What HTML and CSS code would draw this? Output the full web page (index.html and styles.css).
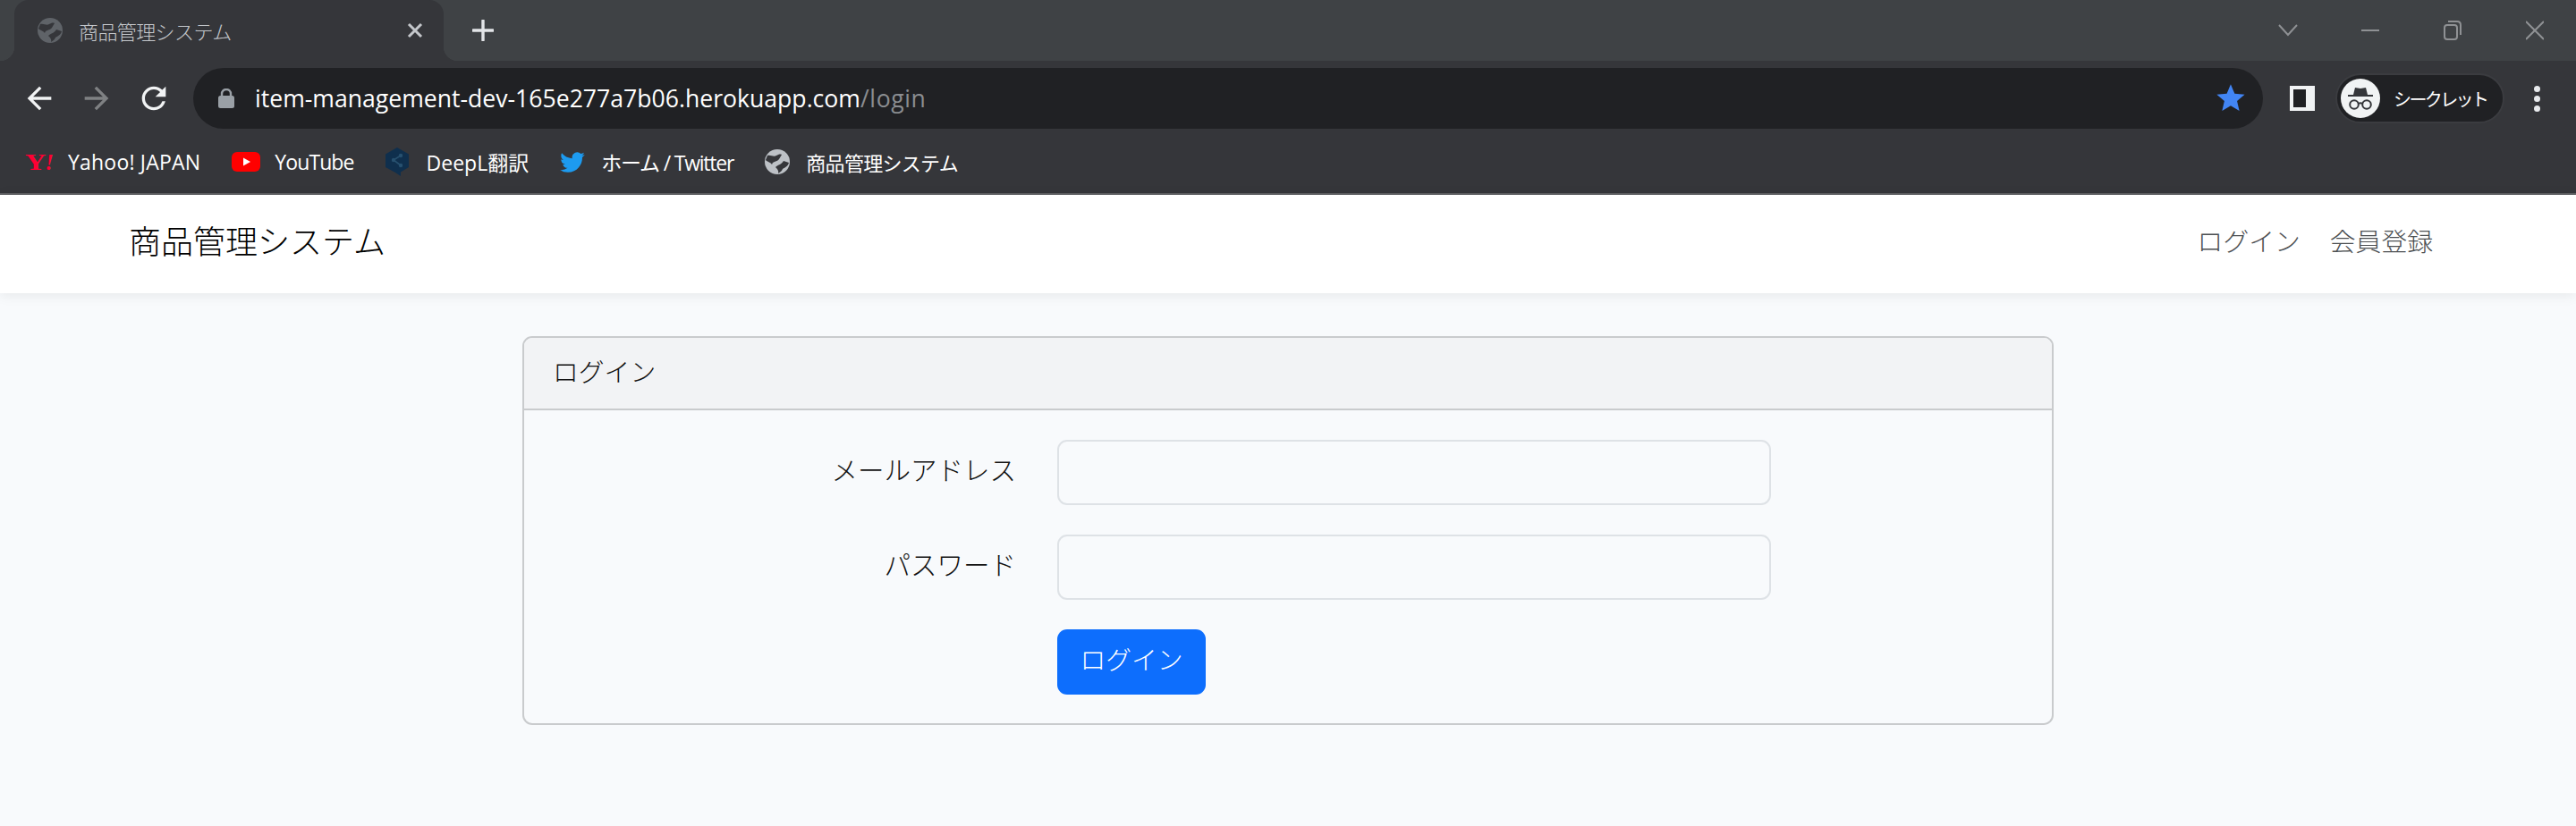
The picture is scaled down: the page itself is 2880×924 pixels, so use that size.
FILE: index.html
```html
<!DOCTYPE html>
<html lang="ja">
  <head>
    <meta charset="utf-8">
    <title>商品管理システム</title>
    <link rel="stylesheet" href="styles.css">
  </head>
  <body>
    <div class="chrome">
      <div class="tab-strip">
        <div class="tab">
          <svg class="globe" viewBox="0 0 28 28"><circle cx="14" cy="14" r="14" fill="#5f6368"/><path d="M3 7C7 6 10 9 13 7C15 6 17 5 19 6L16 11C14 14 9 13 8 17C6 14 3 14 1 12Z" fill="#35363a"/><path d="M12 20C15 17 19 17 21 13L27 15C26 19 23 20 20 22C19 25 16 26 15 27C16 24 14 22 12 20Z" fill="#35363a"/></svg>
          <span class="tab-title">商品管理システム</span>
          <svg class="tab-close" viewBox="0 0 18 18"><path d="M2 2L16 16M16 2L2 16" stroke="#c4c7cb" stroke-width="3"/></svg>
        </div>
        <svg class="new-tab" viewBox="0 0 24 24"><path d="M12 1V23M1 12H23" stroke="#e3e5e8" stroke-width="3.4" stroke-linecap="round"/></svg>
        <div class="window-controls">
          <div class="win-btn"><svg width="22" height="14" viewBox="0 0 22 14"><path d="M1 1L11 12L21 1" fill="none" stroke="#8f9194" stroke-width="2"/></svg></div>
          <div class="win-btn"><svg width="20" height="4" viewBox="0 0 20 4"><path d="M0 2H20" stroke="#8f9194" stroke-width="2"/></svg></div>
          <div class="win-btn"><svg width="20" height="22" viewBox="0 0 20 22"><rect x="1" y="5" width="14" height="16" rx="3" fill="none" stroke="#8f9194" stroke-width="2"/><path d="M5 1H15C17.500 1 19 2.500 19 5V16" fill="none" stroke="#8f9194" stroke-width="2"/></svg></div>
          <div class="win-btn"><svg width="20" height="22" viewBox="0 0 20 22"><path d="M0 1L20 21M20 1L0 21" stroke="#8f9194" stroke-width="2"/></svg></div>
        </div>
      </div>

      <div class="toolbar">
        <div class="nav-btn"><svg width="40" height="40" viewBox="0 0 24 24"><path d="M20 11H7.830l5.590-5.590L12 4l-8 8 8 8 1.410-1.410L7.830 13H20v-2z" fill="#f1f3f4"/></svg></div>
        <div class="nav-btn"><svg width="40" height="40" viewBox="0 0 24 24"><path d="M4 11h12.170l-5.590-5.590L12 4l8 8-8 8-1.410-1.410L16.170 13H4v-2z" fill="#7f8183"/></svg></div>
        <div class="nav-btn"><svg width="40" height="40" viewBox="0 0 24 24"><path d="M17.650 6.350A7.958 7.958 0 0012 4c-4.420 0-7.990 3.580-7.990 8s3.570 8 7.990 8c3.730 0 6.840-2.550 7.730-6h-2.080A5.990 5.990 0 0112 18c-3.310 0-6-2.690-6-6s2.690-6 6-6c1.660 0 3.140.690 4.220 1.780L13 11h7V4l-2.350 2.350z" fill="#f1f3f4"/></svg></div>
        <div class="omnibox">
          <svg class="lock" viewBox="0 0 18 22"><path d="M4 9V6a5 5 0 0110 0v3" fill="none" stroke="#9aa0a6" stroke-width="2.400"/><rect y="8" width="18" height="14" rx="2.500" fill="#9aa0a6"/></svg>
          <span class="url">item-management-dev-165e277a7b06.herokuapp.com<span class="url-path">/login</span></span>
          <svg class="star" viewBox="0 0 24 24"><path d="M12 17.270L18.180 21l-1.640-7.030L22 9.240l-7.190-.610L12 2 9.190 8.630 2 9.240l5.460 4.730L5.820 21z" fill="#4285f4" transform="translate(-.5 -.5) scale(1.040)"/></svg>
        </div>
        <div class="side-panel"></div>
        <div class="profile">
          <div class="avatar">
            <svg width="28" height="26" viewBox="0 0 28 26"><path d="M6 9L8 1L14 2L20 1L22 9Z" fill="#35363a"/><path d="M0 10H28" stroke="#35363a" stroke-width="2"/><circle cx="7" cy="20" r="4.800" fill="none" stroke="#35363a" stroke-width="2"/><circle cx="21" cy="20" r="4.800" fill="none" stroke="#35363a" stroke-width="2"/><path d="M12 19Q14 17.500 16 19" fill="none" stroke="#35363a" stroke-width="2"/></svg>
          </div>
          <span class="profile-name">シークレット</span>
        </div>
        <div class="menu-dots"><i></i><i></i><i></i></div>
      </div>

      <div class="bookmarks">
        <div class="bookmark"><span class="yahoo-mark"><span class="yahoo-y">Y</span><em>!</em></span><span class="bm-yahoo">Yahoo! JAPAN</span></div>
        <div class="bookmark"><svg width="32" height="22" viewBox="0 0 32 22"><rect width="32" height="22" rx="6" fill="#f00"/><path d="M13 6.500L21 11L13 15.500Z" fill="#fff"/></svg><span class="bm-youtube">YouTube</span></div>
        <div class="bookmark bm-wide"><svg width="26" height="32" viewBox="0 0 26 32"><path d="M13 0L26 7.500V22L17 27.500V32L11 28L0 22V7.500Z" fill="#0f2f4d"/><path d="M17 9L9 14L17 20" fill="none" stroke="#27506f" stroke-width="1.600"/><circle cx="9" cy="14" r="2.200" fill="#27506f"/><circle cx="17" cy="9" r="2.200" fill="#27506f"/><circle cx="17" cy="20" r="2.200" fill="#27506f"/></svg><span>DeepL翻訳</span></div>
        <div class="bookmark bm-mid"><svg width="28" height="23" viewBox="0 0 24 20"><path d="M23.953 2.570a10 10 0 01-2.825.775 4.958 4.958 0 002.163-2.723c-.951.555-2.005.959-3.127 1.184a4.920 4.920 0 00-8.384 4.482C7.690 6.095 4.067 4.130 1.640 1.162a4.822 4.822 0 00-.666 2.475c0 1.710.870 3.213 2.188 4.096a4.904 4.904 0 01-2.228-.616v.060a4.923 4.923 0 003.946 4.827 4.996 4.996 0 01-2.212.085 4.936 4.936 0 004.604 3.417 9.867 9.867 0 01-6.102 2.105c-.390 0-.779-.023-1.170-.067a13.995 13.995 0 007.557 2.209c9.053 0 13.998-7.496 13.998-13.985 0-.210 0-.420-.015-.630A9.935 9.935 0 0024 2.590z" fill="#1d9bf0"/></svg><span class="bm-twitter">ホーム / Twitter</span></div>
        <div class="bookmark bm-mid"><svg class="globe" viewBox="0 0 28 28"><circle cx="14" cy="14" r="14" fill="#bdc1c6"/><path d="M3 7C7 6 10 9 13 7C15 6 17 5 19 6L16 11C14 14 9 13 8 17C6 14 3 14 1 12Z" fill="#35363a"/><path d="M12 20C15 17 19 17 21 13L27 15C26 19 23 20 20 22C19 25 16 26 15 27C16 24 14 22 12 20Z" fill="#35363a"/></svg><span class="kana-tight">商品管理システム</span></div>
      </div>
    </div>

    <nav class="navbar">
      <a class="brand" href="#">商品管理システム</a>
      <div class="nav-links">
        <a href="#">ログイン</a>
        <a href="#">会員登録</a>
      </div>
    </nav>

    <main class="container">
      <div class="card">
        <div class="card-header">ログイン</div>
        <form class="card-body">
          <label for="email">メールアドレス</label>
          <input type="email" id="email">
          <label for="password">パスワード</label>
          <input type="password" id="password">
          <button type="button" class="btn-primary">ログイン</button>
        </form>
      </div>
    </main>
  </body>
</html>
```

FILE: styles.css
```css
* {
  box-sizing: border-box;
}
body {
  margin: 0;
  height: 924px;
  overflow: hidden;
  background-color: #f8fafc;
  color: #111;
  font-family: "Open Sans", "Noto Sans CJK JP", sans-serif;
}

/* browser chrome */
.chrome {
  background-color: #35363a;
  border-bottom: 2px solid #5f6063;
}
.tab-strip {
  display: flex;
  align-items: center;
  height: 68px;
  padding-left: 16px;
  background-color: #3f4245;
}
.tab {
  position: relative;
  display: flex;
  align-items: center;
  align-self: stretch;
  width: 480px;
  padding: 0 23px 0 26px;
  background-color: #35363a;
  border-radius: 16px 16px 0 0;
}
.tab::before,
.tab::after {
  content: "";
  position: absolute;
  bottom: 0;
  width: 16px;
  height: 16px;
}
.tab::before {
  left: -16px;
  background: radial-gradient(circle at 0 0, #3f4245 16px, #35363a 16.5px);
}
.tab::after {
  right: -16px;
  background: radial-gradient(circle at 100% 0, #3f4245 16px, #35363a 16.5px);
}
.globe {
  width: 28px;
  height: 28px;
  flex: none;
}
.tab-title {
  margin-left: 18px;
  font-size: 22px;
  font-weight: 300;
  letter-spacing: -0.600px;
  color: #c4c7cb;
}
.tab-close {
  width: 18px;
  height: 18px;
  margin-left: auto;
}
.new-tab {
  width: 24px;
  height: 24px;
  margin-left: 32px;
}
.window-controls {
  display: flex;
  margin-left: auto;
}
.win-btn {
  display: flex;
  align-items: center;
  justify-content: center;
  width: 92px;
  height: 58px;
}

.toolbar {
  display: flex;
  align-items: center;
  height: 76px;
  padding: 8px 0 0 12px;
}
.nav-btn {
  display: flex;
  align-items: center;
  justify-content: center;
  width: 64px;
}
.omnibox {
  display: flex;
  align-items: center;
  width: 2314px;
  height: 68px;
  margin-left: 12px;
  padding: 0 21px 0 28px;
  background-color: #202124;
  border-radius: 34px;
}
.lock {
  width: 18px;
  height: 22px;
}
.url {
  margin-left: 23px;
  font-size: 26.600px;
  color: #fff;
}
.url-path {
  letter-spacing: 0.600px;
  color: #8a8d91;
}
.star {
  width: 36px;
  height: 36px;
  margin-left: auto;
  margin-right: -3px;
}
.side-panel {
  width: 28px;
  height: 28px;
  margin-left: 30px;
  background-color: #202124;
  border: solid #f1f3f4;
  border-width: 4px 10px 4px 4px;
}
.profile {
  display: flex;
  align-items: center;
  flex: none;
  width: 189px;
  height: 56px;
  margin-left: 23px;
  padding-left: 4px;
  background-color: #202124;
  border: 2px solid #3b3c40;
  border-radius: 28px;
}
.avatar {
  display: flex;
  align-items: center;
  justify-content: center;
  flex: none;
  width: 44px;
  height: 44px;
  background-color: #f1f3f4;
  border-radius: 50%;
}
.profile-name {
  margin-left: 15px;
  font-size: 20px;
  letter-spacing: -2.600px;
  white-space: nowrap;
  color: #fff;
}
.menu-dots {
  display: flex;
  flex-direction: column;
  gap: 4px;
  margin-left: 33px;
}
.menu-dots i {
  display: block;
  width: 7px;
  height: 7px;
  background-color: #e8eaed;
  border-radius: 50%;
}

.bookmarks {
  display: flex;
  align-items: center;
  gap: 35px;
  height: 72px;
  padding: 2px 0 0 28px;
  font-size: 23px;
  color: #fff;
}
.bookmark {
  display: flex;
  align-items: center;
  gap: 16px;
}
.bm-wide {
  gap: 20px;
}
.bm-mid {
  gap: 18px;
}
.bm-yahoo {
  letter-spacing: 0.200px;
}
.bm-youtube {
  letter-spacing: -0.900px;
}
.bm-twitter {
  letter-spacing: -1.200px;
}
.yahoo-mark {
  display: flex;
  align-items: center;
  width: 32px;
  font-family: "Liberation Serif", serif;
  font-size: 25px;
  font-weight: bold;
  line-height: 1;
  color: #ff0033;
}
.yahoo-y {
  display: inline-block;
  width: 22px;
  transform: scaleX(1.300);
  transform-origin: left;
}
.yahoo-mark em {
  margin-left: 1px;
}
.kana-tight {
  font-size: 22px;
  letter-spacing: -0.700px;
}

/* page */
.navbar {
  display: flex;
  align-items: center;
  justify-content: space-between;
  height: 110px;
  padding: 0 160px 10px 144px;
  background-color: #fff;
  box-shadow: 0 2px 14px rgba(0, 0, 0, 0.08);
}
.brand {
  font-size: 36px;
  font-weight: 300;
  letter-spacing: 0;
  color: #000;
  text-decoration: none;
}
.nav-links {
  display: flex;
  gap: 33px;
  font-size: 28.800px;
  font-weight: 300;
}
.nav-links a {
  color: #4c4f52;
  text-decoration: none;
}
.container {
  width: 1712px;
  margin: 48px auto 0;
}
.card {
  border: 2px solid #c9cbcd;
  border-radius: 11px;
  overflow: hidden;
}
.card-header {
  display: flex;
  align-items: center;
  height: 81px;
  padding: 0 0 7px 32px;
  font-size: 28.800px;
  font-weight: 300;
  background-color: #f2f3f5;
  border-bottom: 2px solid #c9cbcd;
}
.card-body {
  display: grid;
  grid-template-columns: 548px 798px;
  column-gap: 48px;
  row-gap: 33px;
  padding: 33px 0 32px;
  font-size: 28.800px;
  font-weight: 300;
}
.card-body label {
  align-self: center;
  margin-right: -2px;
  padding-bottom: 8px;
  font-size: 29.500px;
  text-align: right;
}
.card-body input {
  height: 73px;
  background-color: #f8fafc;
  border: 2px solid #dee2e6;
  border-radius: 11px;
}
.btn-primary {
  grid-column: 2;
  width: 166px;
  height: 73px;
  padding: 0 0 8px;
  font: inherit;
  color: #fff;
  background-color: #0d6efd;
  border: 0;
  border-radius: 11px;
}
```
